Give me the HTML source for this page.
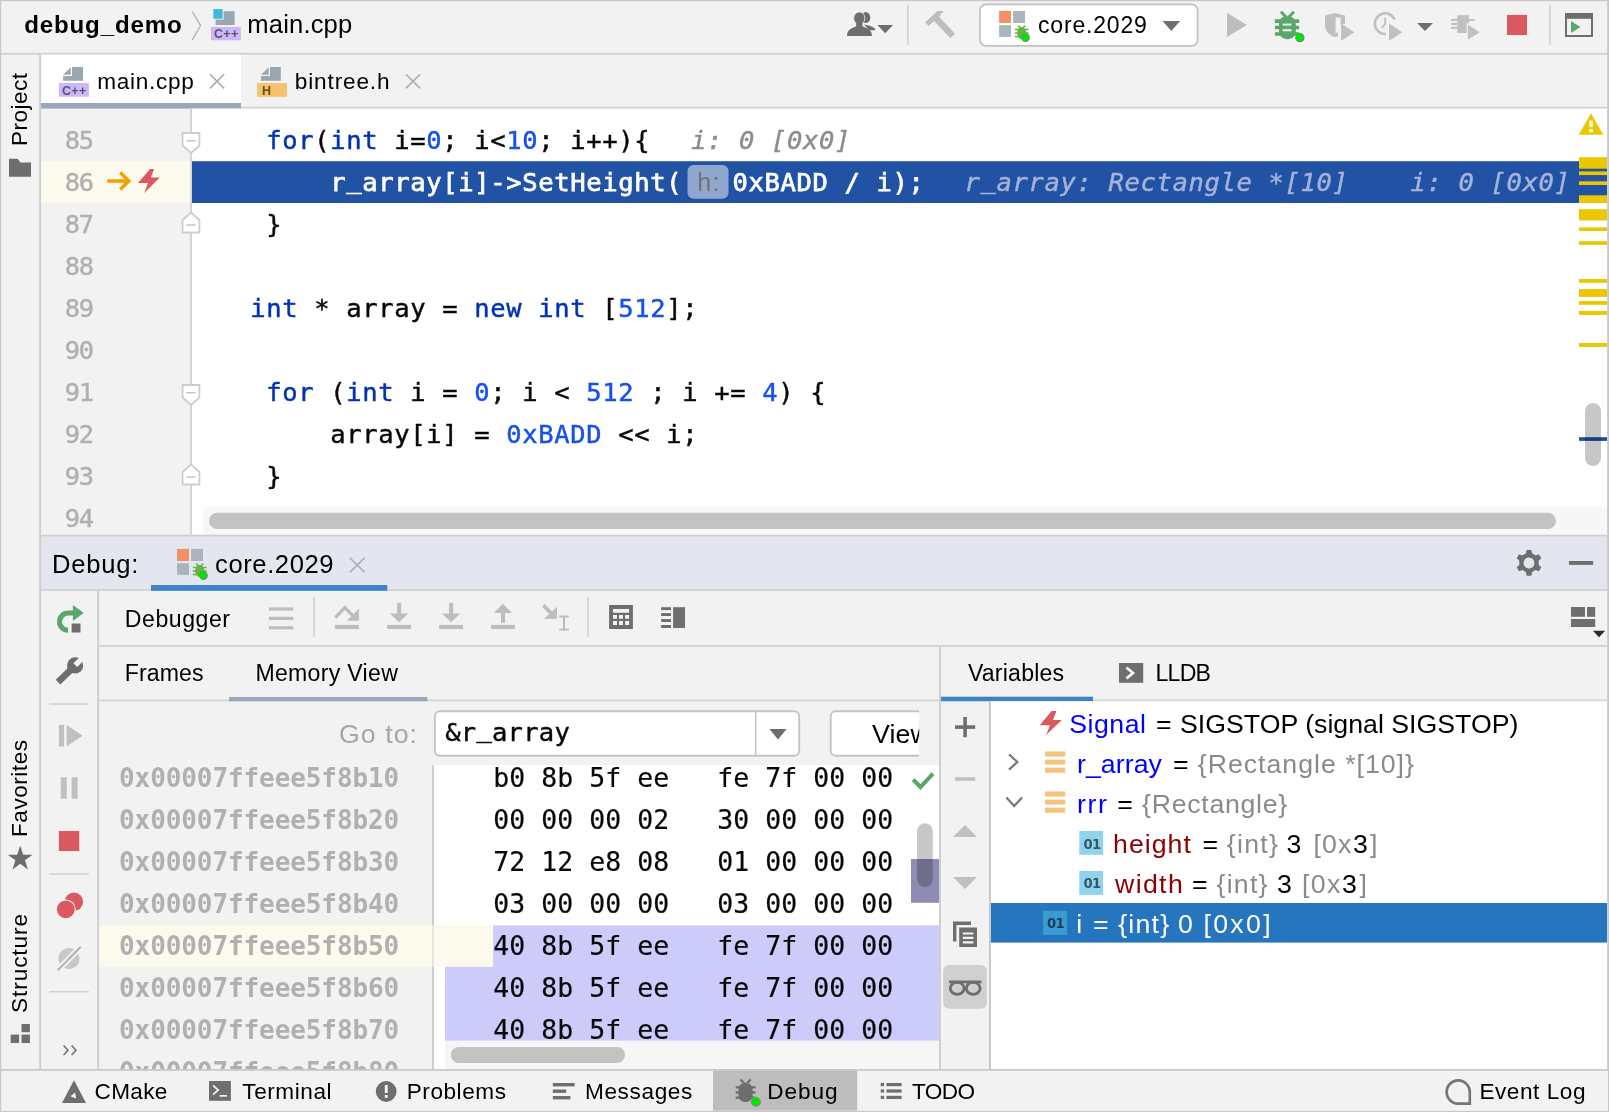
<!DOCTYPE html>
<html><head><meta charset="utf-8"><title>debug_demo</title>
<style>
html,body{margin:0;padding:0;}
body{width:1609px;height:1112px;overflow:hidden;background:#f2f2f2;position:relative;font-family:"Liberation Sans",sans-serif;}
svg{position:absolute;left:0;top:0;}
#base{z-index:0;}
#over{z-index:2;}
.t{position:absolute;line-height:1;white-space:pre;z-index:1;}
.t.z1{z-index:1;}
.t.z2{z-index:3;}
.t.c{-webkit-text-stroke:0.45px currentColor;}
#txt,#txt2{position:absolute;left:0;top:0;width:1609px;height:1112px;z-index:1;will-change:transform;}
#txt2{z-index:3;}
.t.hx{-webkit-text-stroke:0.2px currentColor;}
.t.c .cw{-webkit-text-stroke:0.75px currentColor;}
.us{position:relative;top:-3.8px;}

</style></head>
<body>
<svg id="base" width="1609" height="1112" viewBox="0 0 1609 1112">
<!-- ===== backgrounds ===== -->
<rect x="0" y="0" width="1609" height="1112" fill="#f2f2f2"/>
<rect x="0" y="52.8" width="1609" height="1.9" fill="#d1d1d1"/>
<!-- editor tabs -->
<rect x="41" y="54.7" width="200" height="48.5" fill="#ffffff"/>
<rect x="241" y="106.8" width="1366" height="1.9" fill="#d1d1d1"/>
<rect x="41" y="103" width="200" height="5.6" fill="#9aa7bb"/>
<!-- editor -->
<rect x="191.8" y="108.7" width="1415.2" height="426" fill="#ffffff"/>
<rect x="190.1" y="108.7" width="1.8" height="426" fill="#d2d2d2"/>
<rect x="41" y="161" width="149.3" height="42" fill="#fcfaed"/>
<rect x="192" y="161.2" width="1415" height="41.8" fill="#2152a3"/>
<!-- error stripe marks -->
<g fill="#ebc700">
<rect x="1579" y="157.2" width="28" height="11.5"/>
<rect x="1579" y="171.4" width="28" height="3.7"/>
<rect x="1579" y="181.3" width="28" height="3.7"/>
<rect x="1579" y="195.3" width="28" height="7.7"/>
<rect x="1579" y="209.2" width="28" height="11.3"/>
<rect x="1579" y="227.4" width="28" height="3.6"/>
<rect x="1579" y="241.2" width="28" height="3.7"/>
<rect x="1579" y="279" width="28" height="3.8"/>
<rect x="1579" y="289.1" width="28" height="7.8"/>
<rect x="1579" y="301" width="28" height="3.8"/>
<rect x="1579" y="311" width="28" height="3.9"/>
<rect x="1579" y="343" width="28" height="3.9"/>
</g>
<rect x="1579" y="437.2" width="28" height="3.7" fill="#1e50a5"/>
<rect x="1585" y="403" width="16" height="63" rx="8" fill="#000" fill-opacity="0.22"/>
<!-- warning triangle -->
<path d="M1591 113.3 L1603.3 134.8 L1578.7 134.8 Z" fill="#ebc700"/>
<rect x="1589.4" y="120.6" width="3.3" height="6.4" fill="#fff"/>
<rect x="1589.4" y="129" width="3.3" height="3.3" fill="#fff"/>
<!-- h scrollbar -->
<rect x="203.5" y="507.4" width="1403.5" height="27.6" fill="#f7f7f7"/>
<rect x="209" y="512.8" width="1347" height="16.2" rx="8.1" fill="#c3c3c3"/>
<rect x="41" y="534.7" width="1566" height="2" fill="#cfcfcf"/>
<!-- debug header -->
<rect x="41" y="536.7" width="1566" height="52.6" fill="#e3e6ee"/>
<rect x="41" y="589.2" width="1566" height="1.7" fill="#cfcfcf"/>
<rect x="151" y="585" width="236.3" height="5.8" fill="#4083c9"/>
<!-- debug panes -->
<rect x="97.2" y="590.9" width="1.9" height="478.6" fill="#cfcfcf"/>
<rect x="99.3" y="645" width="1507.7" height="1.8" fill="#d1d1d1"/>
<rect x="99.3" y="699.6" width="1507.7" height="1.7" fill="#d1d1d1"/>
<rect x="229" y="697" width="198.3" height="4.2" fill="#9aa7bb"/>
<rect x="941" y="696.7" width="152" height="4.5" fill="#4083c9"/>
<!-- memory view -->
<rect x="434" y="765" width="505.3" height="304.5" fill="#ffffff"/>
<rect x="432" y="765" width="2" height="304.5" fill="#cdcdcd"/>
<rect x="99.3" y="925.4" width="393.7" height="41.4" fill="#fcfaed"/>
<rect x="432" y="925.4" width="2" height="41.4" fill="#e6e4da"/>
<rect x="493" y="925.4" width="446.3" height="41.6" fill="#cccbfa"/>
<rect x="445" y="966.8" width="494.3" height="74" fill="#cccbfa"/>
<rect x="445" y="1040.8" width="494.3" height="28.7" fill="#f6f6f6"/>
<rect x="450.8" y="1047" width="174.2" height="16" rx="8" fill="#c3c3c3"/>
<rect x="911" y="859" width="28.3" height="43.8" fill="#8e8cb4"/>
<rect x="917" y="823.2" width="15.8" height="63.8" rx="7.9" fill="#000" fill-opacity="0.22"/>
<path d="M913.2 779.6 L920.5 787 L933 773.6" fill="none" stroke="#59a869" stroke-width="4"/>
<!-- go-to combo -->
<rect x="434.9" y="711.2" width="364.3" height="44.5" rx="5" fill="#fff" stroke="#c4c4c4" stroke-width="1.9"/>
<rect x="755" y="711" width="1.5" height="44.3" fill="#c4c4c4"/>
<path d="M769.4 729 L786.6 729 L778 739.4 Z" fill="#6e6e6e"/>
<clipPath id="cv"><rect x="820" y="702" width="99.2" height="63"/></clipPath><rect x="830.7" y="711.2" width="130" height="44.5" rx="5" fill="#fff" stroke="#c4c4c4" stroke-width="1.9" clip-path="url(#cv)"/>

<rect x="939.1" y="646.8" width="1.9" height="422.7" fill="#cecece"/>
<!-- variables -->
<rect x="991" y="701.3" width="616.3" height="368.2" fill="#ffffff"/>
<rect x="989" y="701.3" width="2" height="368.2" fill="#c9c9c9"/>
<rect x="991" y="903" width="616" height="39.6" fill="#2675bf"/>
<!-- status bar -->
<rect x="0" y="1069" width="1609" height="1.8" fill="#c9c9c9"/>
<!-- ===== nav bar icons ===== -->
<path d="M192.2 11.5 L200.6 25.6 L192.2 39.8" fill="none" stroke="#b4b4b4" stroke-width="1.4"/>
<!-- nav C++ file icon -->
<rect x="215.6" y="11.2" width="19" height="13.8" fill="#9aa7b0"/>
<rect x="212.4" y="8.2" width="11.2" height="11.4" fill="#f2f2f2"/>
<rect x="213.4" y="9.1" width="9.2" height="9.6" fill="#40b6e0"/>
<rect x="211" y="26.9" width="29.8" height="13.4" fill="#cbb8f6"/>
<!-- people icon -->
<g fill="#6e6e6e">
<ellipse cx="865.8" cy="17.6" rx="4.5" ry="5.5"/>
<path d="M864 24.5 C870 26 875.6 27 875.3 30.2 L869 30.2 Z"/>
<ellipse cx="859.3" cy="18.2" rx="5.6" ry="6.3" stroke="#f2f2f2" stroke-width="0.8"/>
<path d="M847 36 C847 29.5 852 28 856.2 26.2 L856.2 22.5 L862.5 22.5 L862.5 26.2 C867 28 872 29.5 872 36 Z"/>
<path d="M877.4 24.9 L893 24.9 L885.2 33.3 Z"/>
</g>
<rect x="907" y="5" width="1.6" height="39.7" fill="#cfcfcf"/>
<!-- hammer -->
<g stroke="#bdbdbd" fill="none">
<path d="M926.9 24.2 L939.6 12.6" stroke-width="5.2"/>
<path d="M937 12 L943 12" stroke-width="2"/>
<path d="M936 18.2 L952.7 36" stroke-width="6.4"/>
</g>
<!-- run config combo -->
<rect x="980" y="4.3" width="217.6" height="41.6" rx="6" fill="#fff" stroke="#c2c2c2" stroke-width="1.7"/>
<g>
<rect x="999.1" y="10.9" width="11.9" height="12.1" fill="#f49064"/>
<rect x="1013.1" y="10.9" width="11.9" height="12.1" fill="#a9b4bc"/>
<rect x="999.1" y="25.2" width="11.9" height="11.7" fill="#a9b4bc"/>
<g fill="#62b543" stroke="#62b543">
<ellipse cx="1021.7" cy="33" rx="4.6" ry="6" stroke="none"/>
<path d="M1018.2 25.6 L1020.6 28 M1025.2 25.6 L1022.8 28" stroke-width="1.6" fill="none"/>
<path d="M1014.8 29.5 H1028.6 M1014.8 33 H1028.6 M1014.8 36.5 H1028.6" stroke-width="1.6" fill="none"/>
</g>
<circle cx="1025.5" cy="37.6" r="4.3" fill="#7a7a7a"/>
<circle cx="1025.2" cy="37.3" r="3.6" fill="#00e600"/>
</g>
<path d="M1162.6 21 L1180.1 21 L1171.3 31.1 Z" fill="#6e6e6e"/>
<!-- run -->
<path d="M1227 12.8 L1246.8 24.9 L1227 37 Z" fill="#bdbdbd"/>
<!-- debug bug -->
<g fill="#59a869" stroke="#59a869">
<path d="M1279 24 C1279 18.6 1282.5 16.2 1287.4 16.2 C1292.3 16.2 1295.8 18.6 1295.8 24 L1295.8 31 C1295.8 36 1292.3 39.2 1287.4 39.2 C1282.5 39.2 1279 36 1279 31 Z" stroke="none"/>
<path d="M1280.9 11.8 L1286 17 M1293.9 11.8 L1288.8 17" stroke-width="3" fill="none"/>
<path d="M1274.9 21.1 H1299.2 M1274.9 27.5 H1299.2 M1274.9 34 H1299.2" stroke-width="3.6" fill="none"/>
</g>
<rect x="1282.7" y="23.6" width="8.8" height="2" fill="#f2f2f2"/>
<rect x="1282.7" y="29.2" width="8.8" height="2.1" fill="#f2f2f2"/>
<circle cx="1299.9" cy="37.7" r="4.6" fill="#7a7a7a"/>
<circle cx="1299.5" cy="37.3" r="3.9" fill="#00e600"/>
<!-- coverage -->
<path d="M1325 15.6 L1335 13 L1345 15.6 L1345 24 L1340.6 24 L1340.6 17.6 L1335.6 17.6 L1335.6 33.5 L1338 32 L1338 36 L1335 37.2 C1329 35 1325 31 1325 25 Z" fill="#c0c0c0"/>
<path d="M1341.1 23.6 L1354.4 32.2 L1341.1 40.8 Z" fill="#c0c0c0"/>
<!-- profile -->
<path d="M1394.8 19.6 A10.4 10.4 0 1 0 1386 34" fill="none" stroke="#c0c0c0" stroke-width="2.6"/>
<path d="M1385.2 17.8 L1385.2 24 L1381.6 28.2" fill="none" stroke="#c0c0c0" stroke-width="2"/>
<path d="M1389 23.6 L1402.4 32.2 L1389 40.8 Z" fill="#c0c0c0"/>
<path d="M1417 23 L1433 23 L1425 31.1 Z" fill="#6e6e6e"/>
<!-- attach -->
<g fill="#c0c0c0">
<rect x="1457.2" y="15.2" width="11.8" height="17.8"/>
<rect x="1451" y="19" width="6.5" height="1.9"/><rect x="1451" y="23" width="6.5" height="1.9"/><rect x="1451" y="26.8" width="6.5" height="2"/>
<rect x="1468.5" y="19" width="6.4" height="1.9"/>
<path d="M1467.2 23.6 L1480.8 32.2 L1467.2 40.8 Z" stroke="#f2f2f2" stroke-width="1.2"/>
</g>
<rect x="1507" y="14.9" width="20" height="20.1" fill="#db5860"/>
<rect x="1549" y="5" width="1.6" height="39.7" fill="#cfcfcf"/>
<!-- run anything window -->
<rect x="1566" y="14" width="26" height="22" fill="none" stroke="#6e6e6e" stroke-width="2"/>
<rect x="1565" y="13" width="28" height="5.8" fill="#6e6e6e"/>
<path d="M1571 21.1 L1580.4 27 L1571 33 Z" fill="#59a869"/>
<!-- ===== editor tab icons ===== -->
<g fill="#9aa7b0">
<path d="M72 67 H83 V80.8 H63.1 V76 H72 Z"/><path d="M63.1 74.7 L70.8 67.2 V74.7 Z"/>
<path d="M270 67 H280.8 V80.7 H261 V76 H270 Z"/><path d="M261 74.7 L268.7 67.2 V74.7 Z"/>
</g>
<rect x="59" y="83" width="29.9" height="13.7" fill="#cbb8f6"/>
<rect x="257" y="83" width="30" height="13.9" fill="#f4c36e"/>
<g stroke="#a7aeb6" stroke-width="1.6" fill="none">
<path d="M209.9 74.3 L224.2 88.4 M224.2 74.3 L209.9 88.4"/>
<path d="M405.9 74.3 L420.2 88.4 M420.2 74.3 L405.9 88.4"/>
<path d="M349.8 557.8 L364.6 572.4 M364.6 557.8 L349.8 572.4"/>
</g>
<!-- ===== gutter ===== -->
<g fill="#fff" stroke="#cdcdcd" stroke-width="1.8">
<path d="M182.6 133 H199.4 V145.5 L191 153 L182.6 145.5 Z"/>
<path d="M182.6 385 H199.4 V397.5 L191 405 L182.6 397.5 Z"/>
<path d="M182.6 232.5 H199.4 V220 L191 212.5 L182.6 220 Z"/>
<path d="M182.6 484.5 H199.4 V472 L191 464.5 L182.6 472 Z"/>
</g>
<g stroke="#c4c4c4" stroke-width="1.5">
<path d="M186.4 140.7 H195.6 M186.4 392.7 H195.6 M186.4 224.9 H195.6 M186.4 476.9 H195.6"/>
</g>
<path d="M107.2 181 H127.5 M120.2 172.5 L128.8 181 L120.2 189.5" fill="none" stroke="#eda200" stroke-width="3.4"/>
<path d="M150 169 L154 169 L151 177.6 L159.8 177.6 L144.2 193 L148 183 L138 183 Z" fill="#db5860"/>
<!-- param hint -->
<rect x="687.5" y="165" width="41" height="33.8" rx="6" fill="#8fa6cf"/>
<!-- ===== far-left strip ===== -->
<path d="M9 158.7 H17.5 L20.5 162.6 H31 V176.7 H9 Z" fill="#6e6e6e"/>
<path d="M20.2 845.6 L23.2 854.7 L32.6 854.7 L25 860.3 L27.9 869.5 L20.2 863.8 L12.5 869.5 L15.4 860.3 L7.8 854.7 L17.2 854.7 Z" fill="#6e6e6e"/>
<g fill="#6e6e6e"><rect x="21.5" y="1024" width="8.4" height="8.2"/><rect x="10.7" y="1034.6" width="8.4" height="8.4"/><rect x="21.5" y="1034.6" width="8.4" height="8.4"/></g>
<!-- ===== debug header ===== -->
<g transform="translate(-822 538)">
<rect x="999.1" y="10.9" width="11.9" height="12.1" fill="#f49064"/>
<rect x="1013.1" y="10.9" width="11.9" height="12.1" fill="#a9b4bc"/>
<rect x="999.1" y="25.2" width="11.9" height="11.7" fill="#a9b4bc"/>
<g fill="#62b543" stroke="#62b543">
<ellipse cx="1021.7" cy="33" rx="4.6" ry="6" stroke="none"/>
<path d="M1018.2 25.6 L1020.6 28 M1025.2 25.6 L1022.8 28" stroke-width="1.6" fill="none"/>
<path d="M1014.8 29.5 H1028.6 M1014.8 33 H1028.6 M1014.8 36.5 H1028.6" stroke-width="1.6" fill="none"/>
</g>
<circle cx="1025.5" cy="37.6" r="4.3" fill="#7a7a7a"/>
<circle cx="1025.2" cy="37.3" r="3.6" fill="#00e600"/>
</g>

<g fill="#6e6e6e">
<path transform="translate(1529 563) scale(1.13) translate(-1529 -561.6)" d="M1526.9 550 h4.2 l0.7 3.2 a9.6 9.6 0 0 1 2.9 1.7 l3.1 -1 l2.1 3.6 l-2.4 2.2 a9.6 9.6 0 0 1 0 3.4 l2.4 2.2 l-2.1 3.6 l-3.1 -1 a9.6 9.6 0 0 1 -2.9 1.7 l-0.7 3.2 h-4.2 l-0.7 -3.2 a9.6 9.6 0 0 1 -2.9 -1.7 l-3.1 1 l-2.1 -3.6 l2.4 -2.2 a9.6 9.6 0 0 1 0 -3.4 l-2.4 -2.2 l2.1 -3.6 l3.1 1 a9.6 9.6 0 0 1 2.9 -1.7 Z M1529 556.8 a4.8 4.8 0 1 0 0.01 0 Z" fill-rule="evenodd"/>
<rect x="1568.9" y="561" width="24.2" height="3.9"/>
</g>
<!-- ===== debug toolbar ===== -->
<g fill="#bdbdbd">
<rect x="268.9" y="607.4" width="24.3" height="3.2"/><rect x="268.9" y="616.8" width="24.3" height="3.2"/><rect x="268.9" y="626.2" width="24.3" height="3.2"/>
<rect x="334.9" y="624.9" width="24" height="4.1"/>
<path d="M346.7 620.8 L358.9 608.8 V620.8 Z"/>
<rect x="387.1" y="624.9" width="23.9" height="4.1"/>
<rect x="397.1" y="602.9" width="4.1" height="11"/>
<path d="M389.9 613.4 H408.3 L399.1 622.2 Z"/>
<rect x="439.1" y="624.9" width="23.9" height="4.1"/>
<rect x="449.1" y="602.9" width="4.1" height="11"/>
<path d="M441.9 613.4 H460.3 L451.1 622.2 Z"/>
<rect x="491" y="624.9" width="23.9" height="4.1"/>
<rect x="501" y="612.5" width="4.1" height="10.3"/>
<path d="M493.8 612.9 H512 L503 603.8 Z"/>
<path d="M544.2 618.7 L557 606.7 V618.7 Z"/>
<rect x="562.9" y="615.6" width="2.1" height="14.9"/><rect x="559.2" y="615.6" width="9.7" height="1.9"/><rect x="559.2" y="628.6" width="9.7" height="1.9"/>
</g>
<path d="M335.3 617.6 L344.9 607.6 L353 615.8" fill="none" stroke="#bdbdbd" stroke-width="3.2"/>
<path d="M543.3 605.4 L553 615" fill="none" stroke="#bdbdbd" stroke-width="3.6"/>
<rect x="313.4" y="597.2" width="1.6" height="39.5" fill="#cfcfcf"/>
<rect x="587.1" y="597.2" width="1.6" height="39.5" fill="#cfcfcf"/>
<g fill="#6e6e6e">
<path d="M609.1 605 H632.9 V628.9 H609.1 Z M613 609 V612.8 H629.1 V609 Z M613 615 V618.8 H617 V615 Z M619 615 V618.8 H623 V615 Z M625.1 615 V618.8 H629.1 V615 Z M613 621 V625 H617 V621 Z M619 621 V625 H623 V621 Z M625.1 621 V625 H629.1 V621 Z" fill-rule="evenodd"/>
<rect x="673.1" y="607.2" width="11.9" height="20.8"/>
<rect x="661.1" y="607.2" width="9.9" height="2.9"/><rect x="661.1" y="613.1" width="9.9" height="2.9"/><rect x="661.1" y="619.1" width="9.9" height="2.9"/><rect x="661.1" y="625" width="9.9" height="3"/>
<rect x="1571" y="607" width="14" height="9.8"/><rect x="1587" y="607" width="8.2" height="9.8"/><rect x="1571" y="619" width="24.2" height="8"/>
</g>
<path d="M1592.9 630.8 H1605.2 L1599 637.2 Z" fill="#2b2b2b"/>
<!-- ===== debug left strip ===== -->
<path d="M68.1 630.3 A8.6 8.6 0 0 1 68.1 613.1 L74 613.1" fill="none" stroke="#59a869" stroke-width="5"/>
<path d="M72.9 605 L83.7 612.9 L72.9 620.9 Z" fill="#59a869"/>
<rect x="71.1" y="623" width="9.9" height="10" fill="#6e6e6e" stroke="#f2f2f2" stroke-width="1"/>
<g>
<path d="M58 682.2 L72.6 668.2" stroke="#6e6e6e" stroke-width="6.6" fill="none"/>
<circle cx="75.1" cy="665.4" r="8.1" fill="#6e6e6e"/>
<path d="M75.3 665.2 L84 656.6" stroke="#f2f2f2" stroke-width="5.4" fill="none"/>
</g>
<rect x="49.2" y="703.3" width="39.7" height="1.5" fill="#d1d1d1"/>
<rect x="49.2" y="873.3" width="39.7" height="1.5" fill="#d1d1d1"/>
<rect x="49.2" y="991" width="39.7" height="1.5" fill="#d1d1d1"/>
<g fill="#c0c0c0">
<rect x="58.9" y="725" width="5.2" height="21.5"/><path d="M66.6 725 L82.6 735.8 L66.6 746.5 Z"/>
<rect x="60.8" y="777.3" width="6" height="21.4"/><rect x="71.6" y="777.3" width="6" height="21.4"/>
</g>
<rect x="58.9" y="831" width="20.3" height="20" fill="#db5860"/>
<circle cx="73.9" cy="901.7" r="9.2" fill="#db5860"/>
<circle cx="65.8" cy="909.3" r="9.9" fill="#f2f2f2"/>
<circle cx="65.8" cy="909.3" r="8.9" fill="#db5860"/>
<circle cx="69" cy="958.6" r="10.6" fill="#c8c8c8"/>
<path d="M57.8 969.8 L80.6 947.2" stroke="#f2f2f2" stroke-width="6" fill="none"/>
<path d="M57.6 970.4 L80.8 946.8" stroke="#b0b0b0" stroke-width="2" fill="none"/>
<path d="M63.6 1045.4 L68 1050.2 L63.6 1055 M71.6 1045.4 L76 1050.2 L71.6 1055" fill="none" stroke="#6e6e6e" stroke-width="1.5"/>
<!-- ===== variables toolbar ===== -->
<g fill="#6e6e6e"><rect x="955" y="725.3" width="20.2" height="3.6"/><rect x="963.3" y="717" width="3.6" height="20.2"/></g>
<rect x="955" y="777.2" width="20.2" height="3.6" fill="#c0c0c0"/>
<path d="M953 837 L965 825 L977 837 Z" fill="#c0c0c0"/>
<path d="M953 877 L965 889 L977 877 Z" fill="#c0c0c0"/>
<g fill="#6e6e6e">
<path d="M953 921.4 H971 V925 H956.4 V941.6 H953 Z"/>
<path d="M959.2 927.6 H977 V947 H959.2 Z M962.8 932.4 V934.6 H973.4 V932.4 Z M962.8 936.8 V939 H973.4 V936.8 Z M962.8 941.2 V943.4 H973.4 V941.2 Z" fill-rule="evenodd"/>
</g>
<rect x="943.2" y="965" width="43.7" height="43.8" rx="6" fill="#d0d0d0"/>
<g fill="none" stroke="#6e6e6e" stroke-width="2.9">
<ellipse cx="957.2" cy="988.3" rx="6.9" ry="6.1"/><ellipse cx="973.2" cy="988.3" rx="6.9" ry="6.1"/>
<path d="M949 981.9 H981.4" stroke-width="2.6"/>
</g>
<!-- LLDB icon -->
<rect x="1119" y="663" width="24.2" height="19.8" fill="#6e6e6e"/>
<path d="M1126.4 667.4 L1133 672.9 L1126.4 678.4" fill="none" stroke="#fff" stroke-width="2.6"/>
<!-- ===== variables tree ===== -->
<path d="M1051.6 711 L1056.4 711 L1053 720 L1061.8 720 L1046 735 L1050 725.3 L1039.8 725.3 Z" fill="#db5860"/>
<path d="M1009 754.4 L1017.4 762 L1009 769.6" fill="none" stroke="#7a7a7a" stroke-width="2.3"/>
<path d="M1006.4 797.4 L1014.2 806 L1022 797.4" fill="none" stroke="#7a7a7a" stroke-width="2.3"/>
<g fill="#f4c57f">
<rect x="1045" y="751.4" width="20.2" height="5.2"/><rect x="1045" y="759.6" width="20.2" height="5"/><rect x="1045" y="767.6" width="20.2" height="5.2"/>
<rect x="1045" y="791.4" width="20.2" height="5.2"/><rect x="1045" y="799.6" width="20.2" height="5"/><rect x="1045" y="807.6" width="20.2" height="5.2"/>
</g>
<rect x="1079.3" y="831" width="23.8" height="23.8" fill="#8fd4ec"/>
<rect x="1079.3" y="871" width="23.8" height="23.9" fill="#8fd4ec"/>
<rect x="1043" y="910.8" width="24" height="24.1" fill="#3a9bd1"/>

</svg>
<svg id="over" width="1609" height="1112" viewBox="0 0 1609 1112">
<rect x="0" y="1069" width="1609" height="1.8" fill="#c9c9c9"/>
<rect x="0" y="1070.8" width="1609" height="41.2" fill="#f2f2f2"/>
<rect x="713" y="1070.8" width="144.2" height="39.8" fill="#bdbdbd"/>
<rect x="919.2" y="702" width="20.1" height="63" fill="#f2f2f2"/>
<rect x="939.1" y="702" width="1.9" height="63" fill="#cecece"/>
<!-- cmake -->
<path d="M74 1080.3 L86 1102.9 L62 1102.9 Z" fill="#6e6e6e"/>
<path d="M75.2 1092.6 L76 1098.6 L70.4 1096.2 Z" fill="#f2f2f2"/>
<!-- terminal -->
<rect x="209" y="1081" width="21.9" height="19.8" fill="#6e6e6e"/>
<path d="M213 1085.4 L218.2 1090 L213 1094.6" fill="none" stroke="#f2f2f2" stroke-width="1.7"/>
<rect x="219.6" y="1095" width="7.4" height="1.7" fill="#f2f2f2"/>
<!-- problems -->
<circle cx="386.2" cy="1091.5" r="10.4" fill="#6e6e6e"/>
<rect x="384.8" y="1085" width="2.9" height="8" fill="#f2f2f2"/><rect x="384.8" y="1095" width="2.9" height="2.9" fill="#f2f2f2"/>
<!-- messages -->
<g fill="#6e6e6e"><rect x="552.8" y="1083" width="21.8" height="3.4"/><rect x="552.8" y="1089.5" width="13.4" height="3.4"/><rect x="552.8" y="1096" width="17.6" height="3.4"/></g>
<!-- debug bug -->
<g fill="#6e6e6e" stroke="#6e6e6e">
<path d="M738.6 1089.5 C738.6 1085 741.6 1083 745.6 1083 C749.6 1083 752.6 1085 752.6 1089.5 L752.6 1095.5 C752.6 1099.5 749.6 1102 745.6 1102 C741.6 1102 738.6 1099.5 738.6 1095.5 Z" stroke="none"/>
<path d="M740.6 1079.6 L744.4 1083.6 M750.6 1079.6 L746.8 1083.6" stroke-width="2.2" fill="none"/>
<path d="M735.7 1087.4 H755.5 M735.7 1092.5 H755.5 M735.7 1097.6 H755.5" stroke-width="2.4" fill="none"/>
</g>
<circle cx="756" cy="1101.9" r="4.9" fill="#8a8a8a"/>
<circle cx="755.6" cy="1101.5" r="4.1" fill="#00e600"/>
<!-- todo -->
<g fill="#6e6e6e">
<rect x="880.7" y="1083" width="3.4" height="3.2"/><rect x="886.4" y="1083" width="15.2" height="3.2"/>
<rect x="880.7" y="1089.4" width="3.4" height="3.2"/><rect x="886.4" y="1089.4" width="15.2" height="3.2"/>
<rect x="880.7" y="1095.8" width="3.4" height="3.2"/><rect x="886.4" y="1095.8" width="15.2" height="3.2"/>
</g>
<!-- event log -->
<path d="M1469.8 1103.6 H1458 A11.6 11.6 0 1 1 1469.8 1092 Z" fill="none" stroke="#757575" stroke-width="2.6"/>

<!-- window border -->
<rect x="39.2" y="54.7" width="1.9" height="1014.5" fill="#cecece"/>
<rect x="0" y="0" width="1609" height="1.2" fill="#c8c8c8"/>
<rect x="0" y="0" width="1.2" height="1112" fill="#c8c8c8"/>
<rect x="1607.2" y="0" width="1.8" height="1069" fill="#c8c8c8"/><rect x="1608" y="1069" width="1" height="43" fill="#c8c8c8"/>
<rect x="0" y="1110.9" width="1609" height="1.1" fill="#c8c8c8"/>
</svg>

<div id="txt">
<span class="t " style='left:24.20px;top:13.00px;font:normal 700 24.1px/1 "Liberation Sans", sans-serif;color:#000;letter-spacing:0.843px;'>debug_demo</span>
<span class="t " style='left:247.30px;top:12.00px;font:normal 400 25.6px/1 "Liberation Sans", sans-serif;color:#000;letter-spacing:0.155px;'>main.cpp</span>
<span class="t " style='left:1038.00px;top:14.00px;font:normal 400 23px/1 "Liberation Sans", sans-serif;color:#000;letter-spacing:0.812px;'>core.2029</span>
<span class="t " style='left:97.20px;top:71.00px;font:normal 400 22.6px/1 "Liberation Sans", sans-serif;color:#000;letter-spacing:0.713px;'>main.cpp</span>
<span class="t " style='left:294.80px;top:71.00px;font:normal 400 22.6px/1 "Liberation Sans", sans-serif;color:#000;letter-spacing:0.855px;'>bintree.h</span>
<span class="t c" style='left:64.70px;top:128.20px;font:normal 400 25.4px/1 "DejaVu Sans Mono", "Liberation Mono", monospace;color:#b0b0b0;letter-spacing:-1.186px;'>85</span>
<span class="t c" style='left:64.70px;top:170.20px;font:normal 400 25.4px/1 "DejaVu Sans Mono", "Liberation Mono", monospace;color:#b0b0b0;letter-spacing:-1.186px;'>86</span>
<span class="t c" style='left:64.70px;top:212.20px;font:normal 400 25.4px/1 "DejaVu Sans Mono", "Liberation Mono", monospace;color:#b0b0b0;letter-spacing:-1.186px;'>87</span>
<span class="t c" style='left:64.70px;top:254.20px;font:normal 400 25.4px/1 "DejaVu Sans Mono", "Liberation Mono", monospace;color:#b0b0b0;letter-spacing:-1.186px;'>88</span>
<span class="t c" style='left:64.70px;top:296.20px;font:normal 400 25.4px/1 "DejaVu Sans Mono", "Liberation Mono", monospace;color:#b0b0b0;letter-spacing:-1.186px;'>89</span>
<span class="t c" style='left:64.70px;top:338.20px;font:normal 400 25.4px/1 "DejaVu Sans Mono", "Liberation Mono", monospace;color:#b0b0b0;letter-spacing:-1.186px;'>90</span>
<span class="t c" style='left:64.70px;top:380.20px;font:normal 400 25.4px/1 "DejaVu Sans Mono", "Liberation Mono", monospace;color:#b0b0b0;letter-spacing:-1.186px;'>91</span>
<span class="t c" style='left:64.70px;top:422.20px;font:normal 400 25.4px/1 "DejaVu Sans Mono", "Liberation Mono", monospace;color:#b0b0b0;letter-spacing:-1.186px;'>92</span>
<span class="t c" style='left:64.70px;top:464.20px;font:normal 400 25.4px/1 "DejaVu Sans Mono", "Liberation Mono", monospace;color:#b0b0b0;letter-spacing:-1.186px;'>93</span>
<span class="t c" style='left:64.70px;top:506.20px;font:normal 400 25.4px/1 "DejaVu Sans Mono", "Liberation Mono", monospace;color:#b0b0b0;letter-spacing:-1.186px;'>94</span>
<span class="t " style='left:697.20px;top:170.00px;font:normal 400 25px/1 "Liberation Sans", sans-serif;color:#77736e;letter-spacing:1.296px;'>h:</span>
<span class="t " style='left:52.00px;top:552.00px;font:normal 400 25.6px/1 "Liberation Sans", sans-serif;color:#000;letter-spacing:0.776px;'>Debug:</span>
<span class="t " style='left:215.00px;top:552.00px;font:normal 400 25.6px/1 "Liberation Sans", sans-serif;color:#000;letter-spacing:0.587px;'>core.2029</span>
<span class="t " style='left:124.80px;top:608.00px;font:normal 400 23.1px/1 "Liberation Sans", sans-serif;color:#000;letter-spacing:0.537px;'>Debugger</span>
<span class="t " style='left:124.80px;top:661.60px;font:normal 400 23.1px/1 "Liberation Sans", sans-serif;color:#000;letter-spacing:0.096px;'>Frames</span>
<span class="t " style='left:255.40px;top:661.60px;font:normal 400 23.1px/1 "Liberation Sans", sans-serif;color:#000;letter-spacing:0.302px;'>Memory View</span>
<span class="t " style='left:967.90px;top:661.60px;font:normal 400 23.1px/1 "Liberation Sans", sans-serif;color:#000;letter-spacing:0.211px;'>Variables</span>
<span class="t " style='left:1155.40px;top:661.60px;font:normal 400 23.1px/1 "Liberation Sans", sans-serif;color:#000;letter-spacing:-0.722px;'>LLDB</span>
<span class="t " style='left:339.00px;top:721.00px;font:normal 400 26.7px/1 "Liberation Sans", sans-serif;color:#a6a6a6;letter-spacing:1.066px;'>Go to:</span>
<span class="t z1" style='left:872.00px;top:721.00px;font:normal 400 26.7px/1 "Liberation Sans", sans-serif;color:#000;letter-spacing:0.137px;'>View</span>
<span class="t z1" style='left:119.00px;top:764.50px;font:normal 700 26px/1 "DejaVu Sans Mono", "Liberation Mono", monospace;color:#b0b0b0;letter-spacing:-0.089px;'>0x00007ffeee5f8b10</span>
<span class="t z1" style='left:119.00px;top:806.50px;font:normal 700 26px/1 "DejaVu Sans Mono", "Liberation Mono", monospace;color:#b0b0b0;letter-spacing:-0.089px;'>0x00007ffeee5f8b20</span>
<span class="t z1" style='left:119.00px;top:848.50px;font:normal 700 26px/1 "DejaVu Sans Mono", "Liberation Mono", monospace;color:#b0b0b0;letter-spacing:-0.089px;'>0x00007ffeee5f8b30</span>
<span class="t z1" style='left:119.00px;top:890.50px;font:normal 700 26px/1 "DejaVu Sans Mono", "Liberation Mono", monospace;color:#b0b0b0;letter-spacing:-0.089px;'>0x00007ffeee5f8b40</span>
<span class="t z1" style='left:119.00px;top:932.50px;font:normal 700 26px/1 "DejaVu Sans Mono", "Liberation Mono", monospace;color:#b0b0b0;letter-spacing:-0.089px;'>0x00007ffeee5f8b50</span>
<span class="t z1" style='left:119.00px;top:974.50px;font:normal 700 26px/1 "DejaVu Sans Mono", "Liberation Mono", monospace;color:#b0b0b0;letter-spacing:-0.089px;'>0x00007ffeee5f8b60</span>
<span class="t z1" style='left:119.00px;top:1016.50px;font:normal 700 26px/1 "DejaVu Sans Mono", "Liberation Mono", monospace;color:#b0b0b0;letter-spacing:-0.089px;'>0x00007ffeee5f8b70</span>
<span class="t z1" style='left:119.00px;top:1058.50px;font:normal 700 26px/1 "DejaVu Sans Mono", "Liberation Mono", monospace;color:#b0b0b0;letter-spacing:-0.089px;'>0x00007ffeee5f8b80</span>
<span class="t hx" style='left:493.20px;top:764.60px;font:normal 400 26.5px/1 "DejaVu Sans Mono", "Liberation Mono", monospace;color:#080808;letter-spacing:0.046px;'>b0 8b 5f ee   fe 7f 00 00</span>
<span class="t hx" style='left:493.20px;top:806.60px;font:normal 400 26.5px/1 "DejaVu Sans Mono", "Liberation Mono", monospace;color:#080808;letter-spacing:0.046px;'>00 00 00 02   30 00 00 00</span>
<span class="t hx" style='left:493.20px;top:848.60px;font:normal 400 26.5px/1 "DejaVu Sans Mono", "Liberation Mono", monospace;color:#080808;letter-spacing:0.046px;'>72 12 e8 08   01 00 00 00</span>
<span class="t hx" style='left:493.20px;top:890.60px;font:normal 400 26.5px/1 "DejaVu Sans Mono", "Liberation Mono", monospace;color:#080808;letter-spacing:0.046px;'>03 00 00 00   03 00 00 00</span>
<span class="t hx" style='left:493.20px;top:932.60px;font:normal 400 26.5px/1 "DejaVu Sans Mono", "Liberation Mono", monospace;color:#080808;letter-spacing:0.046px;'>40 8b 5f ee   fe 7f 00 00</span>
<span class="t hx" style='left:493.20px;top:974.60px;font:normal 400 26.5px/1 "DejaVu Sans Mono", "Liberation Mono", monospace;color:#080808;letter-spacing:0.046px;'>40 8b 5f ee   fe 7f 00 00</span>
<span class="t hx" style='left:493.20px;top:1016.60px;font:normal 400 26.5px/1 "DejaVu Sans Mono", "Liberation Mono", monospace;color:#080808;letter-spacing:0.046px;'>40 8b 5f ee   fe 7f 00 00</span>
<span class="t " style='left:1069.20px;top:711.20px;font:normal 400 26.7px/1 "Liberation Sans", sans-serif;color:#0000ff;letter-spacing:0.529px;'>Signal</span>
<span class="t " style='left:1156.00px;top:711.20px;font:normal 400 26.7px/1 "Liberation Sans", sans-serif;color:#000;'>=</span>
<span class="t " style='left:1180.00px;top:711.20px;font:normal 400 26.7px/1 "Liberation Sans", sans-serif;color:#000;letter-spacing:0.011px;'>SIGSTOP (signal SIGSTOP)</span>
<span class="t " style='left:1077.00px;top:751.10px;font:normal 400 26.7px/1 "Liberation Sans", sans-serif;color:#0000ff;letter-spacing:0.069px;'>r_array</span>
<span class="t " style='left:1173.00px;top:751.10px;font:normal 400 26.7px/1 "Liberation Sans", sans-serif;color:#000;'>=</span>
<span class="t " style='left:1197.80px;top:751.10px;font:normal 400 26.7px/1 "Liberation Sans", sans-serif;color:#8a8a8a;letter-spacing:0.988px;'>{Rectangle *[10]}</span>
<span class="t " style='left:1077.00px;top:791.00px;font:normal 400 26.7px/1 "Liberation Sans", sans-serif;color:#0000ff;letter-spacing:1.613px;'>rrr</span>
<span class="t " style='left:1117.30px;top:791.00px;font:normal 400 26.7px/1 "Liberation Sans", sans-serif;color:#000;'>=</span>
<span class="t " style='left:1142.00px;top:791.00px;font:normal 400 26.7px/1 "Liberation Sans", sans-serif;color:#8a8a8a;letter-spacing:0.721px;'>{Rectangle}</span>
<span class="t " style='left:1113.00px;top:830.80px;font:normal 400 26.7px/1 "Liberation Sans", sans-serif;color:#8b0000;letter-spacing:1.040px;'>height</span>
<span class="t " style='left:1202.50px;top:830.80px;font:normal 400 26.7px/1 "Liberation Sans", sans-serif;color:#000;'>=</span>
<span class="t " style='left:1226.80px;top:830.80px;font:normal 400 26.7px/1 "Liberation Sans", sans-serif;color:#8a8a8a;letter-spacing:1.275px;'>{int}</span>
<span class="t " style='left:1286.60px;top:830.80px;font:normal 400 26.7px/1 "Liberation Sans", sans-serif;color:#000;'>3</span>
<span class="t " style='left:1313.50px;top:830.80px;font:normal 400 26.7px/1 "Liberation Sans", sans-serif;color:#8a8a8a;letter-spacing:1.122px;'>[0x</span>
<span class="t " style='left:1353.00px;top:830.80px;font:normal 400 26.7px/1 "Liberation Sans", sans-serif;color:#000;'>3</span>
<span class="t " style='left:1370.00px;top:830.80px;font:normal 400 26.7px/1 "Liberation Sans", sans-serif;color:#8a8a8a;'>]</span>
<span class="t " style='left:1115.00px;top:870.80px;font:normal 400 26.7px/1 "Liberation Sans", sans-serif;color:#8b0000;letter-spacing:1.360px;'>width</span>
<span class="t " style='left:1192.00px;top:870.80px;font:normal 400 26.7px/1 "Liberation Sans", sans-serif;color:#000;'>=</span>
<span class="t " style='left:1216.60px;top:870.80px;font:normal 400 26.7px/1 "Liberation Sans", sans-serif;color:#8a8a8a;letter-spacing:1.200px;'>{int}</span>
<span class="t " style='left:1277.00px;top:870.80px;font:normal 400 26.7px/1 "Liberation Sans", sans-serif;color:#000;'>3</span>
<span class="t " style='left:1302.00px;top:870.80px;font:normal 400 26.7px/1 "Liberation Sans", sans-serif;color:#8a8a8a;letter-spacing:1.372px;'>[0x</span>
<span class="t " style='left:1342.00px;top:870.80px;font:normal 400 26.7px/1 "Liberation Sans", sans-serif;color:#000;'>3</span>
<span class="t " style='left:1359.50px;top:870.80px;font:normal 400 26.7px/1 "Liberation Sans", sans-serif;color:#8a8a8a;'>]</span>
<span class="t " style='left:1076.30px;top:910.70px;font:normal 400 26.7px/1 "Liberation Sans", sans-serif;color:#fff;'>i</span>
<span class="t " style='left:1093.00px;top:910.70px;font:normal 400 26.7px/1 "Liberation Sans", sans-serif;color:#fff;'>=</span>
<span class="t " style='left:1118.20px;top:910.70px;font:normal 400 26.7px/1 "Liberation Sans", sans-serif;color:#fff;letter-spacing:1.250px;'>{int}</span>
<span class="t " style='left:1178.00px;top:910.70px;font:normal 400 26.7px/1 "Liberation Sans", sans-serif;color:#fff;'>0</span>
<span class="t " style='left:1203.40px;top:910.70px;font:normal 400 26.7px/1 "Liberation Sans", sans-serif;color:#fff;letter-spacing:2.339px;'>[0x0]</span>
<span class="t " style='left:1083.40px;top:837.60px;font:normal 700 13.2px/1 "DejaVu Sans", "Liberation Sans", sans-serif;color:#35586a;letter-spacing:-0.576px;'>01</span>
<span class="t " style='left:1083.40px;top:877.40px;font:normal 700 13.2px/1 "DejaVu Sans", "Liberation Sans", sans-serif;color:#35586a;letter-spacing:-0.576px;'>01</span>
<span class="t " style='left:1047.00px;top:917.40px;font:normal 700 13.2px/1 "DejaVu Sans", "Liberation Sans", sans-serif;color:#1d3f5c;letter-spacing:-0.576px;'>01</span>
<span class="t " style='left:62.00px;top:84.50px;font:normal 700 12.5px/1 "Liberation Sans", sans-serif;color:#5b4f73;letter-spacing:0.337px;'>C++</span>
<span class="t " style='left:214.00px;top:28.20px;font:normal 700 12.5px/1 "Liberation Sans", sans-serif;color:#5b4f73;letter-spacing:0.337px;'>C++</span>
<span class="t " style='left:262.00px;top:84.50px;font:normal 700 12.5px/1 "Liberation Sans", sans-serif;color:#6b4c17;'>H</span>
<span class="t" style='left:27.40px;top:127.20px;transform-origin:0 18.00px;transform:rotate(-90deg) translateX(-1.00px);font:normal 400 22.6px/1 "Liberation Sans", sans-serif;color:#000;letter-spacing:0.443px;'>Project</span>
<span class="t" style='left:27.40px;top:817.70px;transform-origin:0 18.00px;transform:rotate(-90deg) translateX(-1.00px);font:normal 400 22.6px/1 "Liberation Sans", sans-serif;color:#000;letter-spacing:0.511px;'>Favorites</span>
<span class="t" style='left:27.40px;top:993.50px;transform-origin:0 18.00px;transform:rotate(-90deg) translateX(-1.00px);font:normal 400 22.6px/1 "Liberation Sans", sans-serif;color:#000;letter-spacing:0.925px;'>Structure</span>
<div class="t c ln" style='left:266.20px;top:128.30px;font:normal 400 25.5px/1 "DejaVu Sans Mono", "Liberation Mono", monospace;letter-spacing:0.648px;'><span style="color:#0033b3;">for</span><span style="color:#080808;">(</span><span style="color:#0033b3;">int</span><span style="color:#080808;"> i=</span><span style="color:#1750eb;">0</span><span style="color:#080808;">; i&lt;</span><span style="color:#1750eb;">10</span><span style="color:#080808;">; i++){</span><span style="color:#8c8c8c;font-style:italic;margin-left:40.80px;">i: 0 [0x0]</span></div>
<div class="t c ln" style='left:330.20px;top:170.30px;font:normal 400 25.5px/1 "DejaVu Sans Mono", "Liberation Mono", monospace;letter-spacing:0.648px;'><span class="cw" style="color:#ffffff;">r<span class="us">_</span>array[i]-&gt;SetHeight(</span><span class="cw" style="color:#ffffff;margin-left:50.30px;">0xBADD / i);</span><span style="color:#a3b3d9;font-style:italic;margin-left:40.00px;">r<span class="us">_</span>array: Rectangle *[10]</span><span style="color:#a3b3d9;font-style:italic;margin-left:62.00px;">i: 0 [0x0]</span></div>
<div class="t c ln" style='left:266.20px;top:212.30px;font:normal 400 25.5px/1 "DejaVu Sans Mono", "Liberation Mono", monospace;letter-spacing:0.648px;'><span style="color:#080808;">}</span></div>
<div class="t c ln" style='left:250.20px;top:296.30px;font:normal 400 25.5px/1 "DejaVu Sans Mono", "Liberation Mono", monospace;letter-spacing:0.648px;'><span style="color:#0033b3;">int</span><span style="color:#080808;"> * array = </span><span style="color:#0033b3;">new</span><span style="color:#080808;"> </span><span style="color:#0033b3;">int</span><span style="color:#080808;"> [</span><span style="color:#1750eb;">512</span><span style="color:#080808;">];</span></div>
<div class="t c ln" style='left:266.20px;top:380.30px;font:normal 400 25.5px/1 "DejaVu Sans Mono", "Liberation Mono", monospace;letter-spacing:0.648px;'><span style="color:#0033b3;">for</span><span style="color:#080808;"> (</span><span style="color:#0033b3;">int</span><span style="color:#080808;"> i = </span><span style="color:#1750eb;">0</span><span style="color:#080808;">; i &lt; </span><span style="color:#1750eb;">512</span><span style="color:#080808;"> ; i += </span><span style="color:#1750eb;">4</span><span style="color:#080808;">) {</span></div>
<div class="t c ln" style='left:330.20px;top:422.30px;font:normal 400 25.5px/1 "DejaVu Sans Mono", "Liberation Mono", monospace;letter-spacing:0.648px;'><span style="color:#080808;">array[i] = </span><span style="color:#1750eb;">0xBADD</span><span style="color:#080808;"> &lt;&lt; i;</span></div>
<div class="t c ln" style='left:266.20px;top:464.30px;font:normal 400 25.5px/1 "DejaVu Sans Mono", "Liberation Mono", monospace;letter-spacing:0.648px;'><span style="color:#080808;">}</span></div>
<div class="t c ln" style='left:445.20px;top:720.00px;font:normal 400 25.5px/1 "DejaVu Sans Mono", "Liberation Mono", monospace;letter-spacing:0.248px;'><span style="color:#080808;">&amp;r<span class="us">_</span>array</span></div>
</div>
<div id="txt2">
<span class="t z2" style='left:94.60px;top:1081.00px;font:normal 400 22.6px/1 "Liberation Sans", sans-serif;color:#000;letter-spacing:0.300px;'>CMake</span>
<span class="t z2" style='left:242.30px;top:1081.00px;font:normal 400 22.6px/1 "Liberation Sans", sans-serif;color:#000;letter-spacing:0.549px;'>Terminal</span>
<span class="t z2" style='left:406.70px;top:1081.00px;font:normal 400 22.6px/1 "Liberation Sans", sans-serif;color:#000;letter-spacing:0.553px;'>Problems</span>
<span class="t z2" style='left:585.00px;top:1081.00px;font:normal 400 22.6px/1 "Liberation Sans", sans-serif;color:#000;letter-spacing:0.618px;'>Messages</span>
<span class="t z2" style='left:767.30px;top:1081.00px;font:normal 400 22.6px/1 "Liberation Sans", sans-serif;color:#000;letter-spacing:0.922px;'>Debug</span>
<span class="t z2" style='left:911.90px;top:1081.00px;font:normal 400 22.6px/1 "Liberation Sans", sans-serif;color:#000;letter-spacing:-0.528px;'>TODO</span>
<span class="t z2" style='left:1479.40px;top:1081.00px;font:normal 400 22.6px/1 "Liberation Sans", sans-serif;color:#000;letter-spacing:0.552px;'>Event Log</span>
</div>
</body></html>
